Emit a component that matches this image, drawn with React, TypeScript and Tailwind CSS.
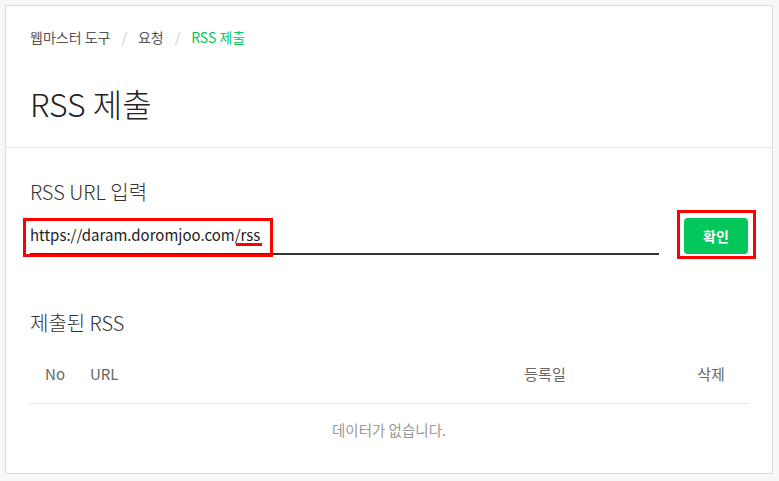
import React from 'react';

const font = { fontFamily: '"Noto Sans CJK KR", "Noto Sans", sans-serif' };

function Breadcrumb() {
  return (
    <nav className="flex items-center text-[14px] leading-[20px] text-[#555]">
      <span>웹마스터 도구</span>
      <span className="mx-[11px] text-[#ccc]">/</span>
      <span>요청</span>
      <span className="mx-[11px] text-[#ccc]">/</span>
      <span className="text-[#03c75a]">RSS 제출</span>
    </nav>
  );
}

function UrlInput() {
  return (
    <div className="mt-[13px] flex items-start">
      <div className="relative flex-1">
        <div className="h-[37px] border-b-2 border-[#333] flex items-center text-[15px] text-[#222]">
          https://daram.doromjoo.com/rss
        </div>
        {/* annotation box */}
        <div className="absolute left-[-7px] top-0 w-[250px] h-[39px] border-[3px] border-[#ff0000] pointer-events-none" />
        <div className="absolute left-[206px] top-[25px] w-[26px] h-[3px] bg-[#ff0000]" />
      </div>
      <div className="relative ml-[25px]">
        <button className="w-[64px] h-[36px] rounded-[4px] bg-[#03c75a] text-white text-[14px] font-bold">
          확인
        </button>
        <div className="absolute left-[-7px] top-[-8px] w-[79px] h-[49px] border-[3px] border-[#ff0000] pointer-events-none" />
      </div>
    </div>
  );
}

function SubmittedTable() {
  return (
    <div>
      <div className="flex items-center h-[40px] mt-[18px] text-[15px] text-[#666]">
        <div className="w-[50px] text-center">No</div>
        <div className="w-[400px] pl-[10px]">URL</div>
        <div className="w-[130px] text-center">등록일</div>
        <div className="flex-1" />
        <div className="w-[74px] text-center">삭제</div>
      </div>
      <div className="border-t border-[#e2e2e2] mt-[9px] pt-[16px] pb-[33px] text-center text-[14.5px] leading-[20px] text-[#999]">
        데이터가 없습니다.
      </div>
    </div>
  );
}

export default function App() {
  return (
    <div className="w-[779px] h-[481px] bg-[#f8f8f8] pt-[5px] pl-[5px]" style={font}>
      <div className="w-[768px] bg-white border border-[#dddddd]">
        <header className="px-[24px] pt-[21px] pb-[24px] border-b border-[#e2e2e2]">
          <Breadcrumb />
          <h1 className="mt-[36px] text-[32px] leading-[40px] text-[#222] font-light">RSS 제출</h1>
        </header>
        <section className="px-[24px] pt-[31px]">
          <h2 className="text-[20px] leading-[26px] text-[#333] font-light">RSS URL 입력</h2>
          <UrlInput />
          <h2 className="mt-[55px] text-[20px] leading-[26px] text-[#333] font-light">제출된 RSS</h2>
          <SubmittedTable />
        </section>
      </div>
    </div>
  );
}
